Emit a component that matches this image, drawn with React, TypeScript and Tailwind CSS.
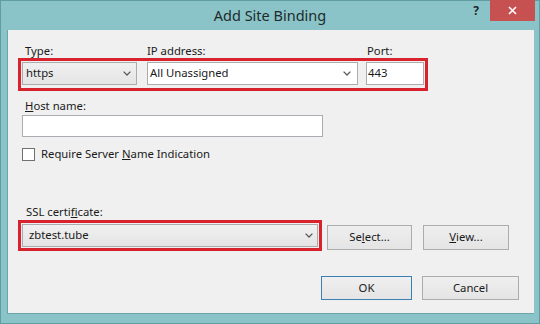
import React from "react";

function Chevron() {
  return (
    <svg width="8" height="5" viewBox="0 0 8 5">
      <path d="M0.6 0.6 L4 4 L7.4 0.6" fill="none" stroke="#5a5a5a" strokeWidth="1.3" />
    </svg>
  );
}

function Btn({ children, className }: { children: React.ReactNode; className: string }) {
  return (
    <div
      className={
        "flex items-center justify-center bg-linear-to-b from-[#efefef] to-[#e4e4e4] border " + className
      }
    >
      {children}
    </div>
  );
}

export default function App() {
  return (
    <div className="w-[540px] h-[324px] bg-[#8ac4c8] border border-[#5e9ea2] flex flex-col font-['Noto_Sans',sans-serif] text-[11.3px] text-[#1a1a1a]">
      <div className="h-[29px] relative flex justify-center">
        <span className="text-[14.5px] leading-[20px] mt-[4px] text-[#1e2a2b]">Add Site Binding</span>
        <span className="absolute right-[60px] top-[3px] text-[12px] leading-[14px] font-bold text-[#1e2a2b]">?</span>
        <div className="absolute right-[4px] top-[-1px] w-[45px] h-[21px] bg-[#c75050] flex items-center justify-center">
          <svg width="9" height="9" viewBox="0 0 9 9">
            <path d="M1 1 L8 8 M8 1 L1 8" stroke="#ffffff" strokeWidth="1.6" />
          </svg>
        </div>
      </div>
      <div className="flex-1 ml-[6px] mr-[5px] mb-[9px] bg-[#f0f0f0] border-l border-b border-[#6aa6aa] flex flex-col pt-[14px]">
        <div className="flex pl-[17px] leading-[14px]">
          <span className="w-[122px]">Type:</span>
          <span className="w-[220px]">IP address:</span>
          <span>Port:</span>
        </div>
        <div className="ml-[10px] w-[410px] border-[3px] border-[#d8232f] pt-[1px] pb-[3px] pl-[1px] flex">
          <div className="w-[115px] h-[23px] border border-[#acacac] bg-linear-to-b from-[#f0f0f0] to-[#e5e5e5] flex items-center justify-between pl-[3px] pr-[5px]">
            <span>https</span>
            <Chevron />
          </div>
          <div className="ml-[10px] w-[211px] h-[23px] border border-[#acacac] bg-white flex items-center justify-between pl-[2px] pr-[6px]">
            <span>All Unassigned</span>
            <Chevron />
          </div>
          <div className="ml-[8px] w-[58px] h-[23px] border border-[#acacac] bg-white flex items-center pl-[1px]">
            <span>443</span>
          </div>
        </div>
        <div className="mt-[8px] pl-[17px] leading-[14px]">
          <span className="underline">H</span>ost name:
        </div>
        <div className="mt-[2px] ml-[14px] w-[301px] h-[22px] bg-white border border-[#abadb3]" />
        <div className="mt-[10px] ml-[14px] flex items-center">
          <div className="w-[13px] h-[13px] bg-white border border-[#707070]" />
          <span className="ml-[6px] leading-[14px]">
            Require Server <span className="underline">N</span>ame Indication
          </span>
        </div>
        <div className="mt-[44px] pl-[18px] leading-[14px]">
          SSL certi<span className="underline">f</span>icate:
        </div>
        <div className="mt-[1px] flex items-start">
          <div className="ml-[10px] w-[304px] h-[31px] border-[3px] border-[#d8232f] p-[1px]">
            <div className="w-full h-[23px] border border-[#acacac] bg-linear-to-b from-[#f0f0f0] to-[#e5e5e5] flex items-center justify-between pl-[6px] pr-[4px]">
              <span>zbtest.tube</span>
              <Chevron />
            </div>
          </div>
          <Btn className="ml-[5px] mt-[5px] w-[85px] h-[25px] border-[#acacac]">
            <span>
              Se<span className="underline">l</span>ect...
            </span>
          </Btn>
          <Btn className="ml-[11px] mt-[5px] w-[86px] h-[25px] border-[#acacac]">
            <span>
              <span className="underline">V</span>iew...
            </span>
          </Btn>
        </div>
        <div className="mt-[25px] flex justify-end mr-[15px]">
          <Btn className="w-[91px] h-[24px] border-[#3c7fb1]">OK</Btn>
          <Btn className="ml-[10px] w-[97px] h-[24px] border-[#acacac]">Cancel</Btn>
        </div>
      </div>
    </div>
  );
}
